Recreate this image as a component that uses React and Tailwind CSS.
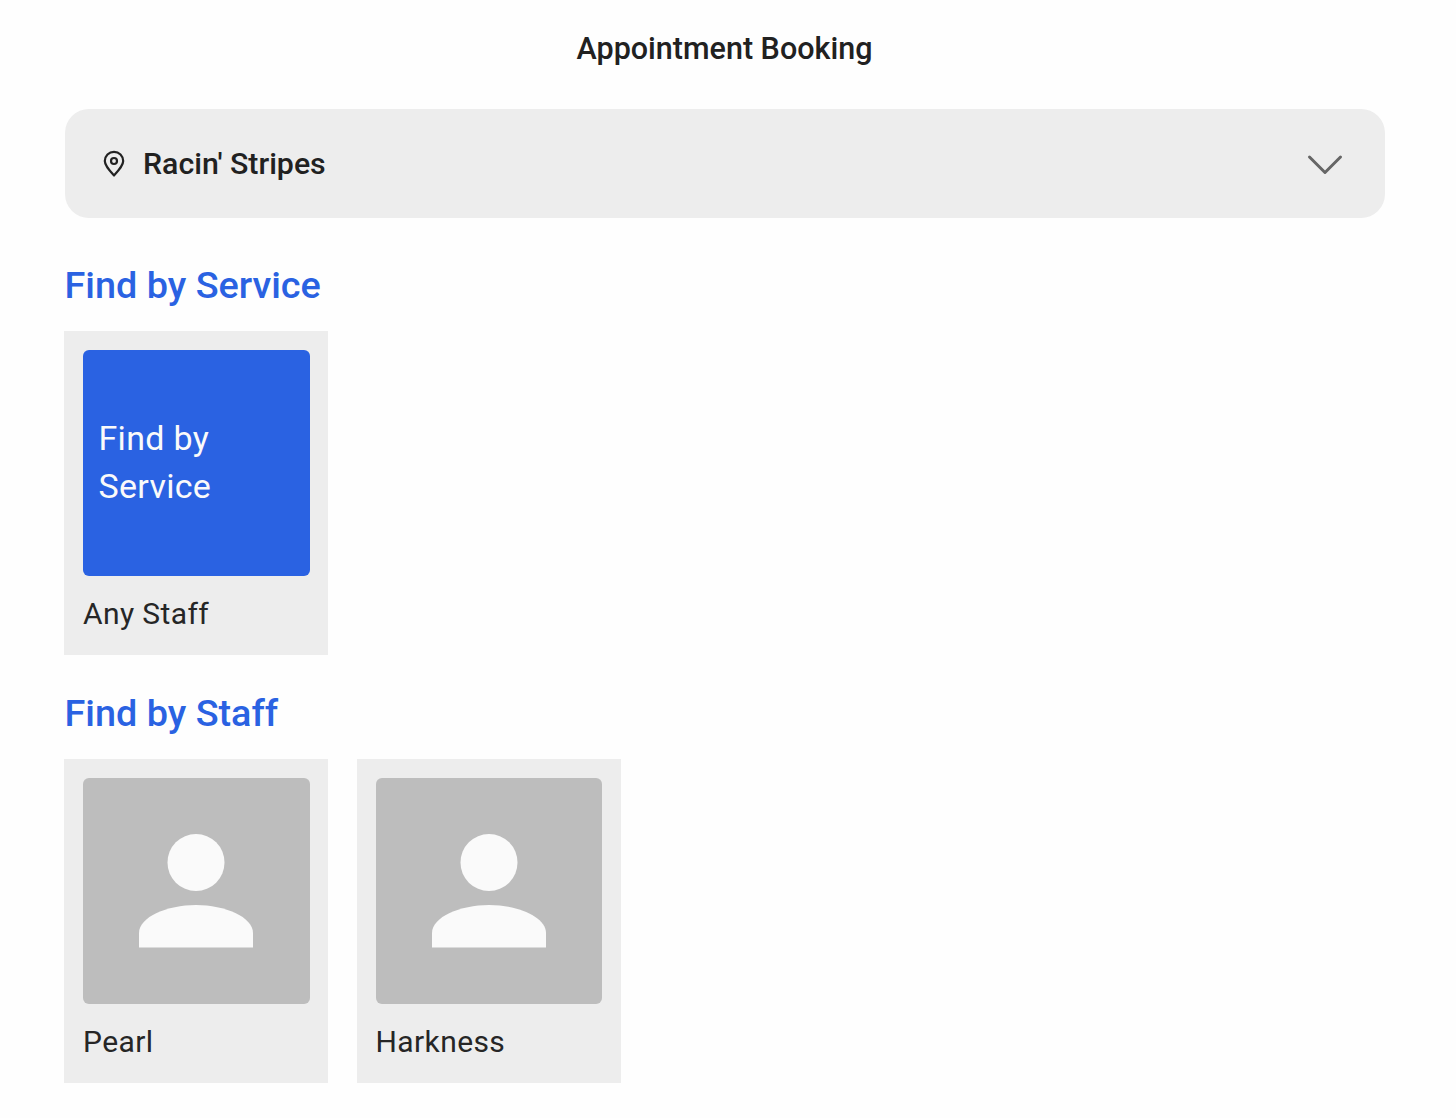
function PinIcon() {
    return (
        <svg width="24" height="28" viewBox="0 0 24 28" fill="none" stroke="#222222" strokeWidth="2.2" strokeLinejoin="round">
            <path d="M12 25.5C7 20 2.8 15.5 2.8 11A9.2 9.2 0 0 1 21.2 11C21.2 15.5 17 20 12 25.5Z" />
            <circle cx="12" cy="11" r="3" />
        </svg>
    );
}

function Chevron() {
    return (
        <svg width="36" height="22" viewBox="0 0 36 22" fill="none" stroke="#666666" strokeWidth="3" strokeLinecap="round" strokeLinejoin="round" className="mt-[3px]">
            <path d="M2.5 3L18 18.5L33.5 3" />
        </svg>
    );
}

function PersonIcon() {
    return (
        <svg width="114" height="114" viewBox="0 0 114 114" fill="#fafafa">
            <circle cx="57" cy="28.5" r="28.5" />
            <path d="M0 113.5V99C0 83 28 71 57 71C86 71 114 83 114 99V113.5Z" />
        </svg>
    );
}

function Card({ label, children }) {
    return (
        <div className="w-[264px] h-[324px] bg-[#ededed] pt-[19px] px-[19px]">
            {children}
            <div className="mt-[19px] text-[30px] leading-[38px] tracking-[0.4px] text-[#262626]">{label}</div>
        </div>
    );
}

export default function App() {
    return (
        <div className="min-h-[1118px] bg-[#fefefe] pl-[64px] font-['Roboto',sans-serif]">
            <h1 className="w-[1321px] pt-[29px] h-[109px] text-center text-[30.5px] leading-[40px] font-medium text-[#212121]">
                Appointment Booking
            </h1>

            <div className="ml-[0.5px] w-[1320.5px] h-[109px] rounded-[24px] bg-[#ededed] flex items-center justify-between pl-[37.5px] pr-[42px]">
                <div className="flex items-center gap-[17px]">
                    <PinIcon />
                    <span className="text-[30.3px] font-medium text-[#212121]">Racin' Stripes</span>
                </div>
                <Chevron />
            </div>

            <h2 className="mt-[42px] h-[51px] text-[37.8px] leading-[50px] font-medium text-[#2a62e2] ml-[0.5px]">Find by Service</h2>
            <div className="mt-[20px] flex gap-[28.5px]">
                <Card label="Any Staff">
                    <div className="w-[226.5px] h-[226px] rounded-[6px] bg-[#2a62e2] flex items-center px-[15.5px] pb-[2px]">
                        <p className="text-[34px] leading-[48px] tracking-[0.3px] text-[#fafafa]">Find by Service</p>
                    </div>
                </Card>
            </div>

            <h2 className="mt-[33px] h-[51px] text-[37.8px] leading-[50px] font-medium text-[#2a62e2] ml-[0.5px]">Find by Staff</h2>
            <div className="mt-[20px] flex gap-[28.5px]">
                {['Pearl', 'Harkness'].map((name) => (
                    <Card key={name} label={name}>
                        <div className="w-[226.5px] h-[226px] rounded-[6px] bg-[#bdbdbd] flex items-center justify-center">
                            <PersonIcon />
                        </div>
                    </Card>
                ))}
            </div>
        </div>
    );
}
